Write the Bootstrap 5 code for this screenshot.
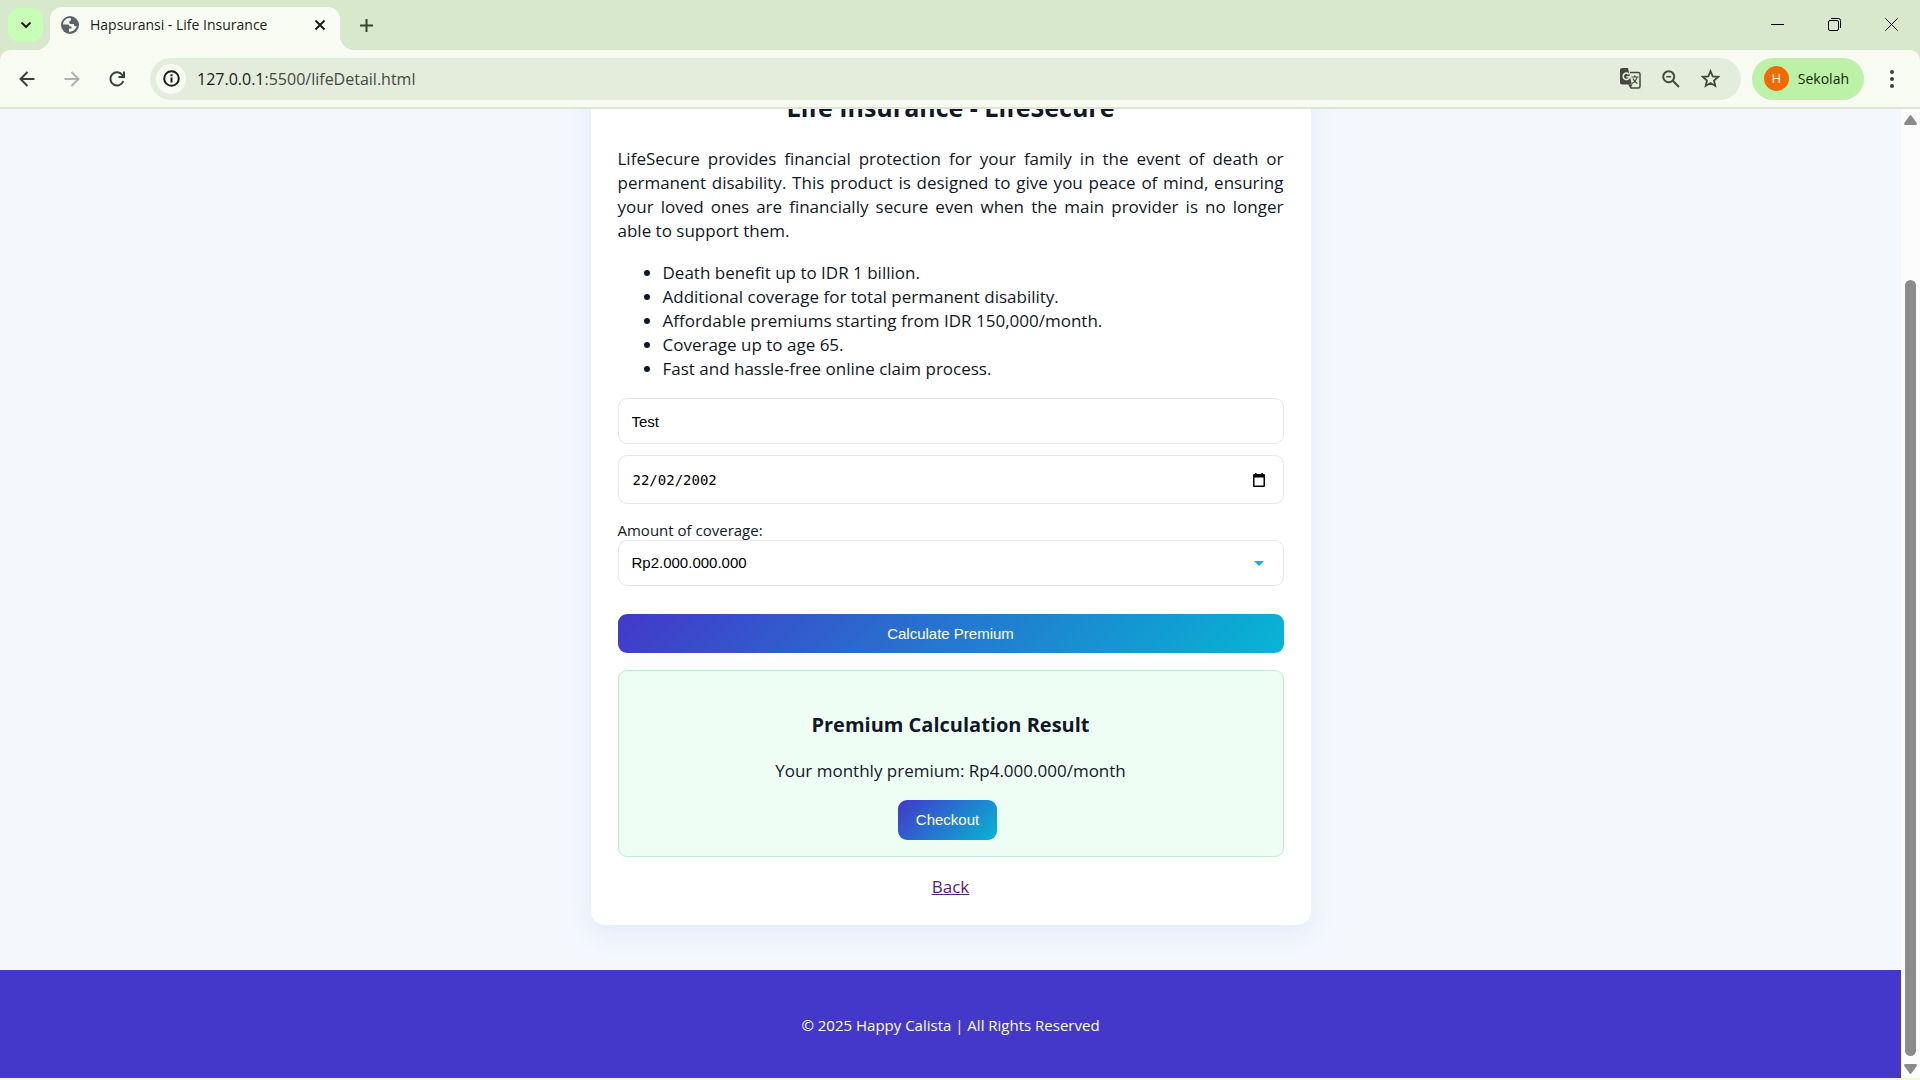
<!DOCTYPE html>
<html lang="en">
<head>
<meta charset="utf-8">
<meta name="viewport" content="width=device-width, initial-scale=1">
<title>Hapsuransi - Life Insurance</title>
<link href="https://cdn.jsdelivr.net/npm/bootstrap@5.3.0/dist/css/bootstrap.min.css" rel="stylesheet">
<style>
  body { font-family: "Open Sans", "Noto Sans", sans-serif; font-size: 17px; line-height: 24px; color: #111827; background: #f4f7fc; }
  button { color: inherit; }
  svg { display: block; flex: none; }
  .plain-btn { border: 0; background: transparent; padding: 0; display: flex; align-items: center; justify-content: center; }

  /* browser frame */
  .tab-strip { height: 50px; background: #d8e8cd; padding-left: 8px; color: #1b1d18; }
  .tab-menu { width: 35px; height: 34px; border-radius: 12px; background: #c8ffb6; }
  .page-tab { position: relative; width: 290px; height: 43px; margin: 7px 0 0 7px; padding: 0 13px 7px 11px; border-radius: 12px 12px 0 0; background: #f8fbf2; font-size: 14px; }
  .page-tab::before, .page-tab::after { content: ""; position: absolute; bottom: 0; width: 14px; height: 14px; }
  .page-tab::before { right: 100%; background: radial-gradient(circle at 0 0, transparent 14px, #f8fbf2 14px); }
  .page-tab::after { left: 100%; background: radial-gradient(circle at 100% 0, transparent 14px, #f8fbf2 14px); }
  .tab-title { padding-left: 11px; }
  .new-tab { width: 28px; height: 50px; margin-left: 12px; }
  .win-btn { width: 57px; height: 48px; }
  .tool-back { background: #d8e8cd; }
  .tool-bar { height: 57px; padding: 0 10px 0 4px; border-radius: 10px 10px 0 0; background: #f8fbf2; color: #37442f; }
  .nav-btn { width: 45px; height: 42px; }
  .omnibox { height: 42px; margin-left: 11px; padding: 0 10px 0 6px; border-radius: 21px; background: #e4eddc; }
  .site-info { width: 30px; height: 30px; border-radius: 50%; background: #f8fbf2; color: #1b1d18; }
  .address { font-size: 16px; color: #454942; margin-left: 11px; }
  .address b { font-weight: 400; color: #1b1d18; }
  .omni-btn { width: 40px; height: 40px; color: #44483d; }
  .profile-chip { height: 42px; margin-left: 11px; padding: 0 15px 0 12px; border-radius: 21px; background: #bdf1a8; color: #0c2b05; font-size: 14px; gap: 9px; }
  .avatar { width: 25px; height: 25px; border-radius: 50%; background: #f06a00; color: #fff; font-family: Roboto, sans-serif; font-size: 13px; line-height: 25px; }
  .menu-btn { width: 36px; height: 42px; margin-left: 10px; }
  .frame-line { height: 2px; background: #dfe4d3; }

  /* page */
  .page-view { background: #f4f7fc; }
  .product { width: 100%; max-width: 720px; padding: 27px 27px 26px; border-radius: 14px; background: #fff; box-shadow: 0 9px 27px rgba(37, 99, 235, .08); margin-bottom: 45px; }
  .product h1 { font-size: 25px; line-height: 36px; font-weight: 700; margin-bottom: 22px; }
  .product p { margin-bottom: 18px; }
  .intro { text-align: justify; }
  .product ul { padding-left: 45px; margin-bottom: 17px; }
  .field { height: 46px; border: 1px solid #e5e7eb; border-radius: 9px; padding: 0 13px; font: 15px/20px "Liberation Sans", sans-serif; color: #000; background-color: #fff; }
  .date-field { height: 49px; margin: 11px 0 16px; padding: 0 14px; font: 14px/20px "DejaVu Sans Mono", monospace; }
  .date-field input { border: 0; outline: 0; min-width: 0; background: none; color: #000; }
  .coverage-label { font-size: 15px; line-height: 20px; }
  .coverage { appearance: none; background: #fff url("data:image/svg+xml,%3Csvg xmlns='http://www.w3.org/2000/svg' width='10' height='5'%3E%3Cpath fill='%2306b6d4' d='M0 0h10L5 5z'/%3E%3C/svg%3E") no-repeat right 19px center; }
  .grad-btn { border: 0; border-radius: 9px; color: #fff; font: 15px/20px "Liberation Sans", sans-serif; background: linear-gradient(135deg, #4338ca, #06b6d4); }
  .calc-btn { height: 39px; margin-top: 28px; }
  .checkout-btn { height: 40px; padding: 0 18px; margin-right: 6px; }
  .result { margin: 17px 0 18px; padding: 40px 18px 16px; border: 1px solid #bbf0d0; border-radius: 9px; background: #effef5; }
  .result h2 { font-size: 20px; line-height: 28px; font-weight: 700; margin-bottom: 20px; }
  .result p { margin-bottom: 17px; }
  .back-link { color: #551a8b; }
  .site-foot { height: 108px; background: #4338ca; color: #fff; font-size: 15px; padding-top: 2px; }
  .side-scroll { width: 19px; padding: 6px 0 4px; background: #fcfcfc; color: #8b8b8b; }
  .scroll-thumb { width: 11px; border-radius: 6px; background: #8b8b8b; flex: 776 0 0; margin-bottom: 8px; }
  .scroll-gap { flex: 155 0 0; }
  .desk-edge { height: 2px; background: #f6f7dd; }
</style>
</head>
<body class="vh-100 d-flex flex-column overflow-hidden">

<header class="flex-shrink-0">
  <div class="tab-strip d-flex">
    <button class="plain-btn tab-menu mt-2" aria-label="Search tabs"><svg width="12" height="8" viewBox="0 0 12 8" fill="none" stroke="currentColor" stroke-width="2"><path d="M1.500 1.500 6 6l4.500-4.500"/></svg></button>
    <div class="page-tab d-flex align-items-center">
      <svg width="18" height="18" viewBox="0 0 18 18"><circle cx="9" cy="9" r="9" fill="#5f6368"/><path fill="#f8fbf2" d="M8.500 2C5 2.200 2.200 5 2 8.500h4.500c1.500 0 2 .8 2 2h2v2h-2.500v3.300c3.800 0 7-2.400 7.700-5.800-1 .6-2 .3-2.700-.5V8h-3c-1 0-1.800-.8-1.800-1.800S9 4.500 10 4.500V3c0-.6-.6-1-1.500-1z"/></svg>
      <span class="tab-title flex-grow-1 text-nowrap">Hapsuransi - Life Insurance</span>
      <button class="plain-btn" aria-label="Close tab"><svg width="14" height="14" viewBox="0 0 14 14" stroke="currentColor" stroke-width="2"><path d="m2.500 2.500 9 9m0-9-9 9"/></svg></button>
    </div>
    <button class="plain-btn new-tab" aria-label="New tab"><svg width="13" height="13" viewBox="0 0 13 13" stroke="#37442f" stroke-width="2"><path d="M6.500 0v13M0 6.500h13"/></svg></button>
    <div class="d-flex ms-auto">
      <button class="plain-btn win-btn" aria-label="Minimize"><svg width="13" height="13" viewBox="0 0 13 13" stroke="#000"><path d="M0 6.500h13"/></svg></button>
      <button class="plain-btn win-btn" aria-label="Restore"><svg width="13" height="13" viewBox="0 0 13 13" fill="none" stroke="#000"><rect x=".5" y="2.500" width="10" height="10" rx="1.500"/><path d="M3 .5h7.500a2 2 0 0 1 2 2V10"/></svg></button>
      <button class="plain-btn win-btn" aria-label="Close"><svg width="13" height="13" viewBox="0 0 13 13" stroke="#000"><path d="m.3.3 12.400 12.400m0-12.400L.3 12.700"/></svg></button>
    </div>
  </div>
  <div class="tool-back">
    <div class="tool-bar d-flex align-items-center">
      <button class="plain-btn nav-btn" aria-label="Back"><svg width="16" height="16" viewBox="0 0 16 16" fill="none" stroke="currentColor" stroke-width="2"><path d="M15.500 8H2m6.500-7L1.500 8l7 7"/></svg></button>
      <button class="plain-btn nav-btn opacity-50" aria-label="Forward"><svg width="16" height="16" viewBox="0 0 16 16" fill="none" stroke="#6b7067" stroke-width="2"><path d="M.5 8H14M7.500 1l7 7-7 7"/></svg></button>
      <button class="plain-btn nav-btn" aria-label="Reload"><svg width="16" height="16" viewBox="0 0 16 16" fill="none" stroke="currentColor" stroke-width="2"><path d="M14.300 10A6.600 6.600 0 1 1 13.500 4.200L15 6M15 .5V6H9.500"/></svg></button>
      <div class="omnibox d-flex align-items-center flex-grow-1">
        <button class="plain-btn site-info" aria-label="Site information"><svg width="17" height="17" viewBox="0 0 17 17" fill="none" stroke="currentColor" stroke-width="2"><circle cx="8.500" cy="8.500" r="7.300"/><path d="M8.500 7.500v5M8.500 4.300v2"/></svg></button>
        <span class="address flex-grow-1"><b>127.0.0.1</b>:5500/lifeDetail.html</span>
        <button class="plain-btn omni-btn" aria-label="Translate"><svg width="21" height="21" viewBox="0 0 21 21" fill="none"><path d="M10 4.500h8.500q1.500 0 1.500 1.500v12.500q0 1.500-1.500 1.500H11l-2-3.500" stroke="currentColor" stroke-width="1.500"/><path d="M2 0h6l3.800 16.500H2q-2 0-2-2V2q0-2 2-2z" fill="currentColor"/><path d="M8.700 6.200a3.200 3.200 0 1 0 .8 2.600H6.500" stroke="#e4eddc" stroke-width="1.600"/><path d="M8.500 16.500h4l-2 3.500z" fill="currentColor"/><path d="M11.500 9h7M14.800 7.300V9m2.200 0c-.5 3-2.500 5-5 6.500M13 10.500c.8 2.200 2 3.500 4.500 5" stroke="currentColor" stroke-width="1.200"/></svg></button>
        <button class="plain-btn omni-btn" aria-label="Zoom"><svg width="18" height="18" viewBox="0 0 18 18" fill="none" stroke="currentColor" stroke-width="2"><circle cx="6.700" cy="6.700" r="5.500"/><path d="m10.800 10.800 6.200 6.200"/><path d="M4.200 6.700h5" stroke-width="1.500"/></svg></button>
        <button class="plain-btn omni-btn" aria-label="Bookmark"><svg width="19" height="19" viewBox="0 0 19 19" fill="none" stroke="currentColor" stroke-width="1.800"><path d="m9.500 2.200 2.200 5.100 5.500.5-4.200 3.700 1.300 5.400-4.800-2.900-4.800 2.900L6 11.500 1.800 7.800l5.500-.5z"/></svg></button>
      </div>
      <button class="plain-btn profile-chip"><span class="avatar">H</span>Sekolah</button>
      <button class="plain-btn menu-btn" aria-label="Menu"><svg width="4" height="18" viewBox="0 0 4 18" fill="currentColor"><circle cx="2" cy="2" r="2"/><circle cx="2" cy="9" r="2"/><circle cx="2" cy="16" r="2"/></svg></button>
    </div>
  </div>
  <div class="frame-line"></div>
</header>

<div class="d-flex flex-grow-1 overflow-hidden">
  <div class="page-view d-flex flex-column justify-content-end align-items-center flex-grow-1 overflow-hidden">
    <main class="product">
      <h1 class="text-center">Life Insurance - LifeSecure</h1>
      <p class="intro">LifeSecure provides financial protection for your family in the event of death or permanent disability. This product is designed to give you peace of mind, ensuring your loved ones are financially secure even when the main provider is no longer able to support them.</p>
      <ul>
        <li>Death benefit up to IDR 1 billion.</li>
        <li>Additional coverage for total permanent disability.</li>
        <li>Affordable premiums starting from IDR 150,000/month.</li>
        <li>Coverage up to age 65.</li>
        <li>Fast and hassle-free online claim process.</li>
      </ul>
      <form class="d-flex flex-column">
        <input class="field w-100" type="text" value="Test" aria-label="Full name">
        <div class="field date-field d-flex align-items-center">
          <input class="flex-grow-1 p-0" type="text" value="22/02/2002" aria-label="Date of birth">
          <button type="button" class="plain-btn" aria-label="Open calendar"><svg width="20" height="14" viewBox="0 0 20 14" fill="#000"><path fill-rule="evenodd" d="M5 1h1V0h1.500v1h5V0H14v1h1q1 0 1 1v11q0 1-1 1H5q-1 0-1-1V2q0-1 1-1zm.5 3.500v8h9v-8z"/></svg></button>
        </div>
        <label class="coverage-label" for="coverage">Amount of coverage:</label>
        <select class="field coverage w-100" id="coverage"><option>Rp2.000.000.000</option></select>
        <button type="button" class="grad-btn calc-btn w-100">Calculate Premium</button>
      </form>
      <section class="result text-center">
        <h2>Premium Calculation Result</h2>
        <p>Your monthly premium: Rp4.000.000/month</p>
        <button type="button" class="grad-btn checkout-btn">Checkout</button>
      </section>
      <div class="text-center"><a class="back-link" href="#">Back</a></div>
    </main>
    <footer class="site-foot w-100 flex-shrink-0 d-flex align-items-center justify-content-center">© 2025 Happy Calista | All Rights Reserved</footer>
  </div>
  <div class="side-scroll d-flex flex-column align-items-center flex-shrink-0" aria-hidden="true">
    <svg width="13" height="10" viewBox="0 0 13 10" fill="currentColor"><path d="M5.500.7q1-1.200 2 0L12.700 8q.6 2-1 2H1.300Q-.3 10 .3 8z"/></svg>
    <div class="scroll-gap"></div>
    <div class="scroll-thumb"></div>
    <svg width="13" height="10" viewBox="0 0 13 10" fill="currentColor"><path d="M5.500 9.300q1 1.200 2 0L12.700 2q.6-2-1-2H1.300Q-.3 0 .3 2z"/></svg>
  </div>
</div>
<div class="desk-edge flex-shrink-0"></div>

<script src="https://cdn.jsdelivr.net/npm/bootstrap@5.3.0/dist/js/bootstrap.bundle.min.js"></script>
</body>
</html>
